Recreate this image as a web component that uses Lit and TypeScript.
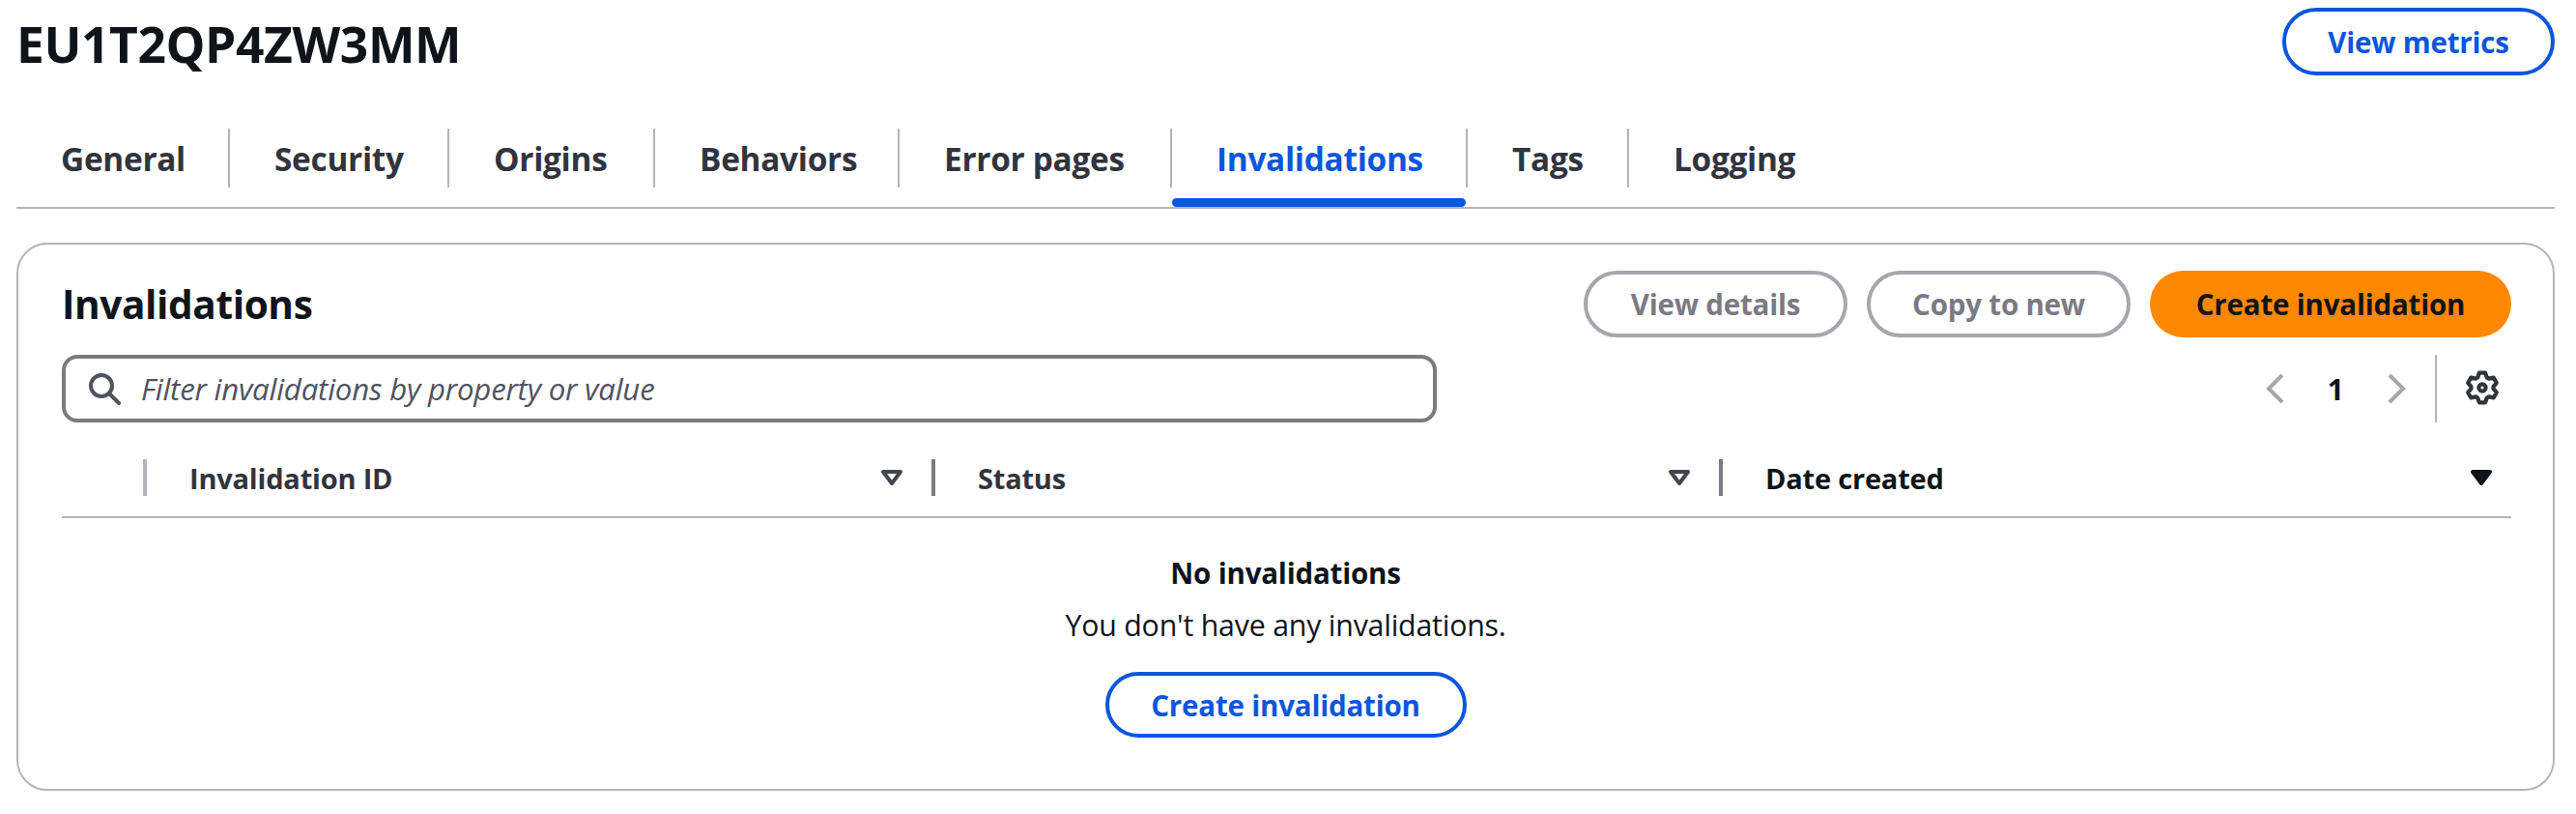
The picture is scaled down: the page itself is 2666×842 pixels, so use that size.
import { LitElement, html, css, svg } from "lit";
import { customElement } from "lit/decorators.js";

const tabs = ["General", "Security", "Origins", "Behaviors", "Error pages", "Invalidations", "Tags", "Logging"];
const tabW = [221, 227, 213, 253, 282, 306, 167, 0];

const gearPath = (() => {
  const cx = 18, cy = 18, ro = 15.6, ri = 11.6;
  let d = "";
  for (let i = 0; i < 6; i++) {
    const a = (-90 + i * 60) * Math.PI / 180;
    const pts: [number, number][] = [
      [a - 0.2, ro], [a + 0.2, ro], [a + 0.42, ri], [a + 0.62, ri],
    ];
    for (const [t, r] of pts) {
      d += `${d ? "L" : "M"}${(cx + r * Math.cos(t)).toFixed(2)} ${(cy + r * Math.sin(t)).toFixed(2)} `;
    }
  }
  return d + "Z";
})();

const sortIcon = (filled: boolean) => html`<svg class="sort" viewBox="0 0 24 18" width="24" height="18">
  <path d="M3 3 H21 L12 15 Z" fill=${filled ? "#0f141a" : "none"} stroke=${filled ? "#0f141a" : "#424650"} stroke-width="4" stroke-linejoin="round"/>
</svg>`;

@customElement("app-root")
export class AppRoot extends LitElement {
  static styles = css`
    :host { display: block; width: 2666px; height: 842px; background: #fff; box-sizing: border-box; padding: 8px 22px 0 17px; font-family: "Open Sans", "Noto Sans", sans-serif; color: #0f141a; overflow: hidden; }
    * { box-sizing: border-box; }
    .head { display: flex; justify-content: space-between; align-items: flex-start; height: 125px; }
    h1 { margin: 0; font-size: 51.5px; font-weight: 700; line-height: 74px; letter-spacing: -0.4px; }
    .btn { display: flex; align-items: center; justify-content: center; height: 70px; border-radius: 35px; border: 4px solid #0a56dc; color: #0a56dc; font-size: 29.5px; font-weight: 700; background: #fff; white-space: nowrap; letter-spacing: -0.2px; }
    .metrics { width: 282px; }
    .tabs { display: flex; height: 83px; border-bottom: 2px solid #b4b4bb; position: relative; }
    .tab { height: 61px; display: flex; align-items: center; padding-left: 46px; font-size: 33.4px; font-weight: 700; color: #31343e; border-right: 2px solid #b4b4bb; white-space: nowrap; position: relative; letter-spacing: -0.3px; }
    .tab.last { border-right: none; }
    .tab.active { color: #0a56dc; }
    .tab.active::after { content: ""; position: absolute; left: 0; right: 0; top: 72px; height: 9px; background: #0a56dc; border-radius: 5px; }
    .panel { margin-top: 35px; height: 567px; border: 2px solid #b4b4bb; border-radius: 32px; padding: 27px 43px 0 45px; }
    .row1 { display: flex; align-items: center; height: 69px; }
    h2 { margin: 0; font-size: 40.6px; font-weight: 700; flex: 1; letter-spacing: -0.4px; }
    .actions { display: flex; gap: 20px; }
    .ghost { width: 273px; height: 69px; border-color: #a6a6ae; color: #7a7a84; border-radius: 35px; }
    .primary { width: 374px; height: 69px; background: #ff8800; border: none; color: #0f141a; }
    .row2 { display: flex; align-items: center; margin-top: 18px; height: 70px; }
    .filter { width: 1423px; height: 70px; border: 4px solid #7a7a84; border-radius: 16px; display: flex; align-items: center; padding-left: 23px; gap: 21px; font-style: italic; font-size: 31.2px; color: #50535e; letter-spacing: -0.2px; }
    .pager { flex: 1; display: flex; align-items: center; justify-content: flex-end; height: 70px; }
    .num { font-size: 30px; font-weight: 700; margin: 0 44px 0 44px; }
    .vsep { width: 2px; height: 70px; background: #b4b4bb; margin: 0 29px 0 30px; }
    .gear { margin: 0 12px 2px 0; }
    .thead { display: grid; grid-template-columns: 84px 816px 815px 1fr; height: 99px; border-bottom: 2px solid #b4b4bb; align-items: end; padding-bottom: 21px; }
    .th { height: 38px; display: flex; align-items: center; justify-content: space-between; font-size: 29px; font-weight: 700; color: #31343e; padding: 0 29px 0 44px; border-left: 4px solid #b4b4bb; letter-spacing: -0.2px; }
    .th.dark { border-left-color: #7a7a84; }
    .th.sel { padding-right: 19px; color: #0f141a; }
    .empty { display: flex; flex-direction: column; align-items: center; padding-top: 39px; padding-right: 2px; font-size: 30.3px; }
    .empty b { font-weight: 700; font-size: 29.5px; line-height: 36px; letter-spacing: -0.2px; }
    .empty span { line-height: 36px; margin-top: 18px; letter-spacing: -0.2px; }
    .create { width: 374px; height: 68px; margin-top: 30px; }
  `;
  render() {
    return html`
      <div class="head"><h1>EU1T2QP4ZW3MM</h1><div class="btn metrics">View metrics</div></div>
      <div class="tabs">
        ${tabs.map((t, i) => html`<div class="tab ${t === "Invalidations" ? "active" : ""} ${i === 7 ? "last" : ""}" style=${tabW[i] ? `width:${tabW[i]}px` : ""}>${t}</div>`)}
      </div>
      <div class="panel">
        <div class="row1">
          <h2>Invalidations</h2>
          <div class="actions">
            <div class="btn ghost">View details</div>
            <div class="btn ghost">Copy to new</div>
            <div class="btn primary">Create invalidation</div>
          </div>
        </div>
        <div class="row2">
          <div class="filter">
            <svg width="34" height="34" viewBox="0 0 34 34" fill="none" stroke="#50535e" stroke-width="4"><circle cx="14" cy="14" r="11"/><path d="M22 22 L32 32" stroke-linecap="round"/></svg>
            Filter invalidations by property or value
          </div>
          <div class="pager">
            <svg width="20" height="32" viewBox="0 0 20 32" fill="none" stroke="#a6a6ae" stroke-width="4"><path d="M17 2 L3 16 L17 30"/></svg>
            <span class="num">1</span>
            <svg width="20" height="32" viewBox="0 0 20 32" fill="none" stroke="#a6a6ae" stroke-width="4"><path d="M3 2 L17 16 L3 30"/></svg>
            <div class="vsep"></div>
            <svg class="gear" width="36" height="36" viewBox="0 0 36 36" fill="none" stroke="#31343e" stroke-width="4.2" stroke-linejoin="round">${svg`<circle cx="18" cy="18" r="3.6"/><path d=${gearPath}/>`}</svg>
          </div>
        </div>
        <div class="thead">
          <div></div>
          <div class="th"><span>Invalidation ID</span>${sortIcon(false)}</div>
          <div class="th dark"><span>Status</span>${sortIcon(false)}</div>
          <div class="th dark sel"><span>Date created</span>${sortIcon(true)}</div>
        </div>
        <div class="empty">
          <b>No invalidations</b>
          <span>You don't have any invalidations.</span>
          <div class="btn create">Create invalidation</div>
        </div>
      </div>
    `;
  }
}
